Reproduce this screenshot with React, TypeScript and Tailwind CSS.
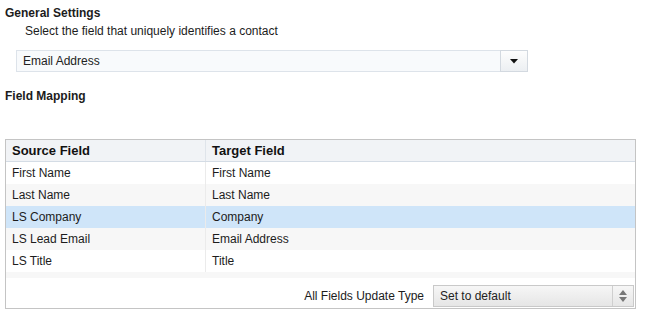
import React from "react";

const rows = [
  { source: "First Name", target: "First Name", bg: "bg-white" },
  { source: "Last Name", target: "Last Name", bg: "bg-[#f7f7f7]" },
  { source: "LS Company", target: "Company", bg: "bg-[#cfe5f9]" },
  { source: "LS Lead Email", target: "Email Address", bg: "bg-[#f7f7f7]" },
  { source: "LS Title", target: "Title", bg: "bg-white" },
];

export default function App() {
  return (
    <div className="w-[647px] h-[319px] bg-white text-[12px] leading-[14px] text-[#1c1c1c] font-['Liberation_Sans',Arial,sans-serif] overflow-hidden">
      <div className="pt-[6px] pl-[5px] font-bold">General Settings</div>
      <div className="mt-[4px] pl-[25px]">Select the field that uniquely identifies a contact</div>

      <div className="mt-[12px] ml-[16px] flex w-[512px] h-[22px]">
        <div className="flex-1 flex items-center pl-[6px] bg-[#f8fafc] border border-[#dde3ea] border-r-0 text-[#222]">
          Email Address
        </div>
        <div className="w-[28px] flex items-center justify-center border border-[#d3d9e0] bg-gradient-to-b from-[#fdfdfd] to-[#eceff2]">
          <svg width="8" height="5" viewBox="0 0 8 5">
            <path d="M0 0 H8 L4 4.5 Z" fill="#111" />
          </svg>
        </div>
      </div>

      <div className="mt-[17px] pl-[5px] font-bold">Field Mapping</div>

      <div className="mt-[36px] ml-[5px] w-[631px] h-[170px] border border-[#c4c4c4] flex flex-col">
        <div className="flex h-[22px] bg-[#f1f3f6] border-b border-[#d4dce5] text-[13px] font-bold text-[#111]">
          <div className="w-[200px] flex items-center pl-[6px] border-r border-[#dfe4ea]">Source Field</div>
          <div className="flex-1 flex items-center pl-[6px]">Target Field</div>
        </div>
        {rows.map((r) => (
          <div key={r.source} className={`flex h-[22px] ${r.bg}`}>
            <div className="w-[200px] flex items-center pl-[6px] border-r border-[#ebebeb]">{r.source}</div>
            <div className="flex-1 flex items-center pl-[6px]">{r.target}</div>
          </div>
        ))}
        <div className="h-[6px] bg-[#f7f7f7]" />
        <div className="flex-1 flex items-end justify-end gap-[9px] pr-[1px] pb-[1px]">
          <span className="h-[22px] flex items-center">All Fields Update Type</span>
          <div className="w-[201px] h-[22px] flex border border-[#c9c9c9] bg-gradient-to-b from-[#f6f6f6] to-[#e6e6e6]">
            <div className="flex-1 flex items-center pl-[6px] text-[#222]">Set to default</div>
            <div className="w-[21px] flex flex-col items-center justify-center gap-[2px] border-l border-[#cfcfcf]">
              <svg width="8" height="5" viewBox="0 0 8 5">
                <path d="M4 0 L8 5 H0 Z" fill="#777" />
              </svg>
              <svg width="8" height="5" viewBox="0 0 8 5">
                <path d="M0 0 H8 L4 5 Z" fill="#777" />
              </svg>
            </div>
          </div>
        </div>
      </div>
    </div>
  );
}
